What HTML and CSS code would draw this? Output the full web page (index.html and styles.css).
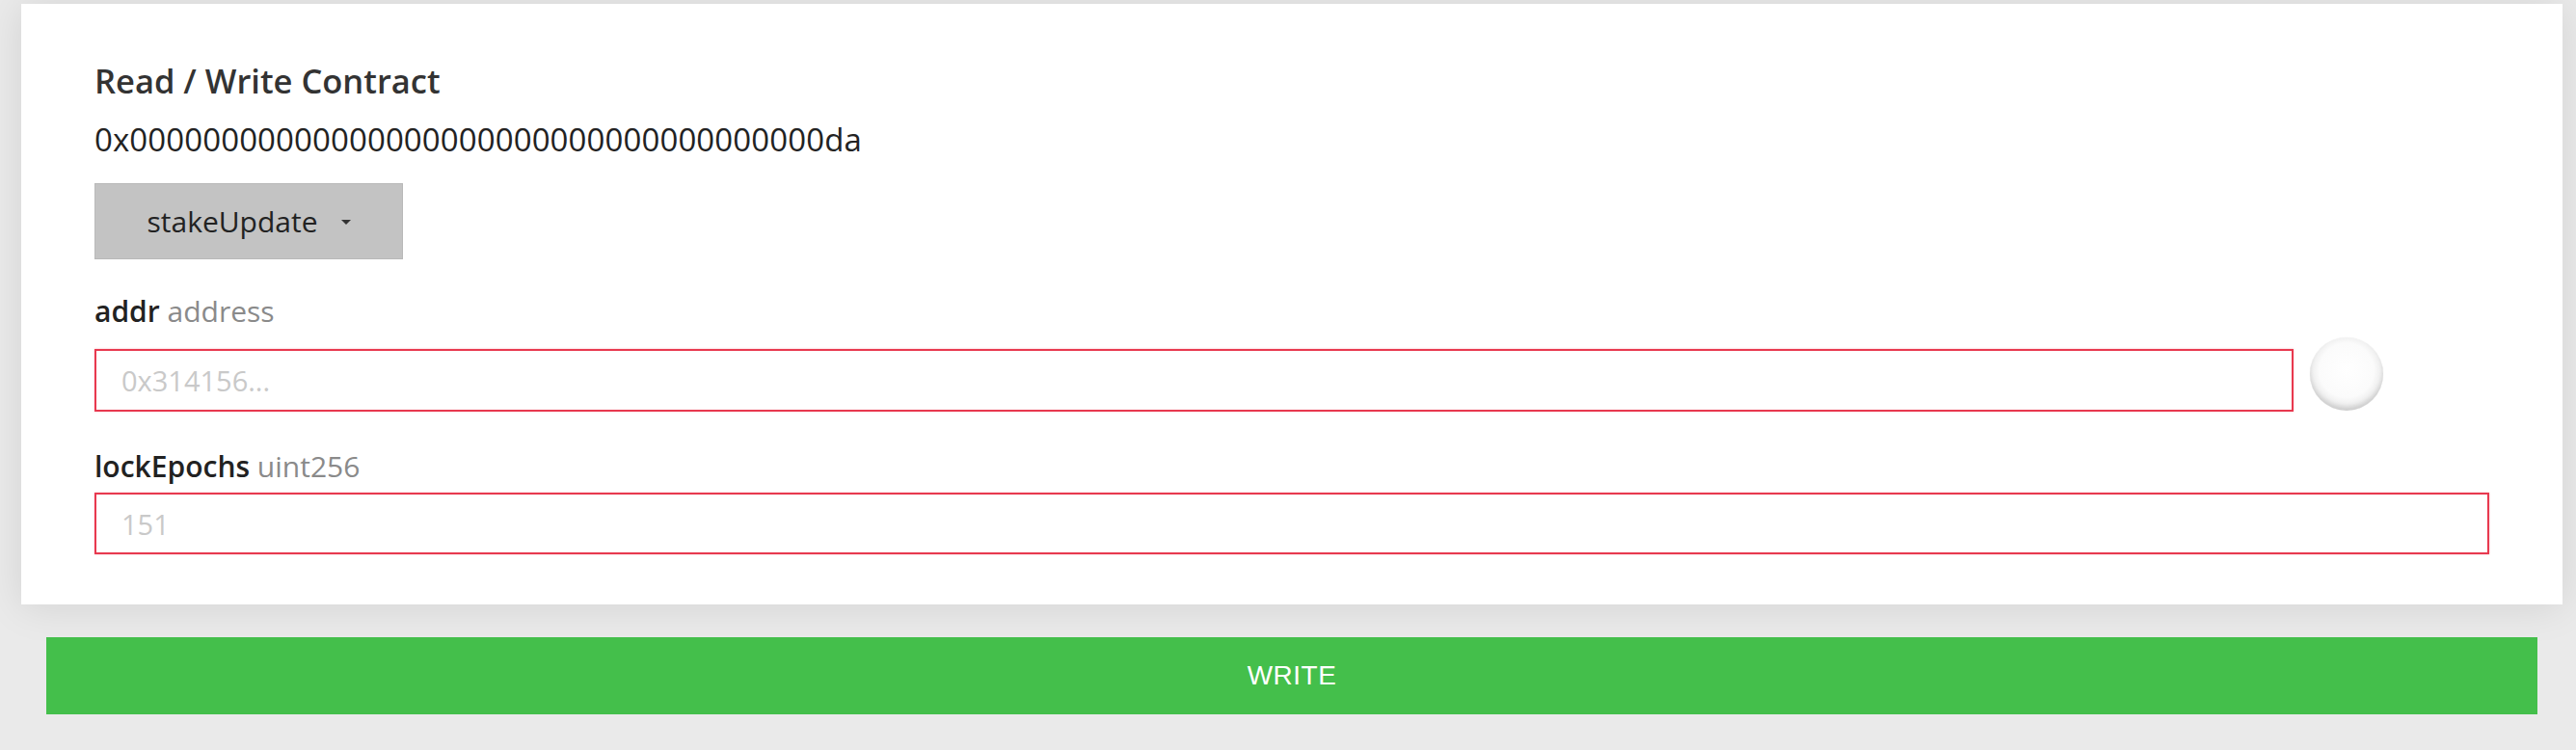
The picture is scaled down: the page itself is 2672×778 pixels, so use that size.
FILE: index.html
```html
<!DOCTYPE html>
<html>
<head>
<meta charset="utf-8">
<link rel="stylesheet" href="styles.css">
</head>
<body>
<div class="page">
  <div class="card">
    <h2 class="title">Read / Write Contract</h2>
    <div class="address">0x00000000000000000000000000000000000000da</div>
    <button class="select">
      <span>stakeUpdate</span>
      <svg class="caret" width="10" height="5" viewBox="0 0 10 5"><path d="M0 0 L10 0 L5 5 Z" fill="#333"/></svg>
    </button>
    <div class="label first"><span class="name">addr</span> <span class="type">address</span></div>
    <div class="row">
      <div class="input"><span class="ph">0x314156...</span></div>
      <div class="knob"></div>
    </div>
    <div class="label second"><span class="name">lockEpochs</span> <span class="type">uint256</span></div>
    <div class="input full"><span class="ph">151</span></div>
  </div>
  <button class="write">WRITE</button>
</div>
</body>
</html>
```

FILE: styles.css
```css
html, body {
  margin: 0;
  padding: 0;
  background: #eaeaea;
}
body {
  font-family: "Open Sans", "DejaVu Sans", sans-serif;
  width: 2672px;
  height: 778px;
  overflow: hidden;
}
.page {
  padding: 4px 14px 0 22px;
  display: flex;
  flex-direction: column;
}
.card {
  background: #fff;
  box-shadow: 0 2px 40px rgba(0, 0, 0, 0.1);
  padding: 60px 76px 52px 76px;
  display: flex;
  flex-direction: column;
  align-items: flex-start;
}
.title {
  margin: 0;
  font-size: 34.5px;
  line-height: 40px;
  font-weight: 600;
  color: #333;
}
.address {
  margin-top: 21px;
  font-size: 33px;
  line-height: 40px;
  letter-spacing: 0.1px;
  color: #222;
}
.select {
  margin-top: 25px;
  width: 320px;
  height: 79px;
  background: #c3c3c3;
  border: 1px solid #b9b9b9;
  display: flex;
  align-items: center;
  justify-content: center;
  gap: 24px;
  font-family: "Open Sans", "DejaVu Sans", sans-serif;
  font-size: 30px;
  color: #222;
  padding: 0;
}
.caret {
  margin-top: 2px;
}
.label {
  font-size: 30px;
  line-height: 36px;
  color: #222;
}
.label.first { margin-top: 36px; }
.label.second { margin-top: 39px; }
.name { font-weight: 600; }
.type { color: #8a8a8a; }
.row {
  margin-top: 21px;
  align-self: stretch;
  display: flex;
  align-items: center;
  gap: 17px;
}
.input {
  box-sizing: border-box;
  height: 65px;
  border: 2px solid #e8394f;
  box-shadow: 0 0 2px rgba(232, 57, 79, 0.35);
  display: flex;
  align-items: center;
  padding-left: 26px;
  font-size: 29px;
  color: #c9c9c9;
}
.row .input {
  width: 2281px;
}
.input.full {
  margin-top: 9px;
  width: 2484px;
  height: 64px;
}
.knob {
  width: 76px;
  height: 76px;
  border-radius: 50%;
  margin-top: -13px;
  background: radial-gradient(circle at 50% 45%, #ffffff 0%, #fbfbfb 50%, #e6e6e6 72%, #cfcfcf 90%, #bdbdbd 100%);
  box-shadow: inset 0 -4px 4px rgba(0, 0, 0, 0.1), 0 0 1px rgba(0, 0, 0, 0.15);
}
.write {
  margin: 34px 26px 0 26px;
  height: 80px;
  background: #44bf4b;
  border: none;
  color: #fff;
  font-family: "Liberation Sans", Arial, sans-serif;
  font-size: 28px;
  letter-spacing: 0.5px;
  padding: 0;
}
```
